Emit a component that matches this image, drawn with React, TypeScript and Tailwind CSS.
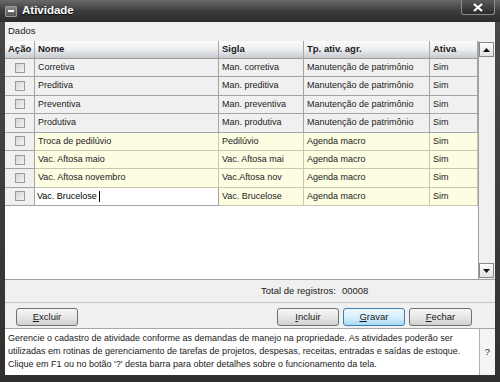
import React from 'react';

type Row = { nome: string; sigla: string; tipo: string; ativa: string; kind: 'man' | 'agenda' | 'edit' };

const rows: Row[] = [
  { nome: 'Corretiva', sigla: 'Man. corretiva', tipo: 'Manutenção de patrimônio', ativa: 'Sim', kind: 'man' },
  { nome: 'Preditiva', sigla: 'Man. preditiva', tipo: 'Manutenção de patrimônio', ativa: 'Sim', kind: 'man' },
  { nome: 'Preventiva', sigla: 'Man. preventiva', tipo: 'Manutenção de patrimônio', ativa: 'Sim', kind: 'man' },
  { nome: 'Produtiva', sigla: 'Man. produtiva', tipo: 'Manutenção de patrimônio', ativa: 'Sim', kind: 'man' },
  { nome: 'Troca de pedilúvio', sigla: 'Pedilúvio', tipo: 'Agenda macro', ativa: 'Sim', kind: 'agenda' },
  { nome: 'Vac. Aftosa maio', sigla: 'Vac. Aftosa mai', tipo: 'Agenda macro', ativa: 'Sim', kind: 'agenda' },
  { nome: 'Vac. Aftosa novembro', sigla: 'Vac.Aftosa nov', tipo: 'Agenda macro', ativa: 'Sim', kind: 'agenda' },
  { nome: 'Vac. Brucelose', sigla: 'Vac. Brucelose', tipo: 'Agenda macro', ativa: 'Sim', kind: 'edit' },
];

const grid = 'grid grid-cols-[30px_184px_85px_126px_48px]';

const Checkbox = () => (
  <div className="w-[10px] h-[10px] border border-[#9a9a9a] bg-gradient-to-br from-[#d6d6d6] to-[#f4f4f4]" />
);

const Button = ({ label, rest, primary }: { label: string; rest: string; primary?: boolean }) => (
  <button
    className={
      'w-full h-[18px] rounded-[3px] border text-[9.5px] text-[#1a1a1a] flex items-center justify-center ' +
      (primary
        ? 'border-[#3c7fb1] bg-gradient-to-b from-[#eaf6fd] via-[#d9f0fc] to-[#a7d9f5]'
        : 'border-[#707070] bg-gradient-to-b from-[#f6f6f6] via-[#e8e8e8] to-[#cfcfcf]')
    }
  >
    <span className="underline">{label}</span>
    {rest}
  </button>
);

const Header = () => (
  <div className={`${grid} h-[18px] border-b border-[#9c9c9c] bg-gradient-to-b from-[#fbfbfb] via-[#eceef0] to-[#c6cbd0] font-bold text-[9.5px] text-[#1a1a1a]`}>
    <div className="px-[3px] flex items-center border-r border-[#a8a8a8]">Ação</div>
    <div className="px-[3px] flex items-center border-r border-[#a8a8a8]">Nome</div>
    <div className="px-[3px] flex items-center border-r border-[#a8a8a8]">Sigla</div>
    <div className="px-[3px] flex items-center border-r border-[#a8a8a8]">Tp. ativ. agr.</div>
    <div className="px-[3px] flex items-center border-r border-[#a8a8a8]">Ativa</div>
  </div>
);

const TableRow = ({ r }: { r: Row }) => {
  const bg = r.kind === 'man' ? 'bg-[#f0f0f0]' : 'bg-[#fdfde2]';
  const line = r.kind === 'man' ? 'border-[#a4a4a4]' : 'border-[#c9c7b0]';
  return (
    <div className={`${grid} h-[18.4px] text-[9px] text-[#222]`}>
      <div className="flex items-center justify-center border-b border-r border-[#a4a4a4] bg-[#f0f0f0]">
        <Checkbox />
      </div>
      {r.kind === 'edit' ? (
        <div className="flex items-center px-[2px] border-b border-r border-[#a4a4a4] bg-white text-black">
          {r.nome}
          <span className="ml-[2px] w-px h-[11px] bg-black" />
        </div>
      ) : (
        <div className={`flex items-center px-[3px] border-b border-r ${line} ${bg}`}>{r.nome}</div>
      )}
      <div className={`flex items-center px-[3px] border-b border-r ${line} ${bg}`}>{r.sigla}</div>
      <div className={`flex items-center px-[3px] border-b border-r ${line} ${bg}`}>{r.tipo}</div>
      <div className={`flex items-center px-[3px] border-b border-r ${line} ${bg}`}>{r.ativa}</div>
    </div>
  );
};

const ScrollBtn = ({ up }: { up?: boolean }) => (
  <div className="w-[15px] h-[15px] border border-[#8a8a8a] bg-gradient-to-b from-[#fdfdfd] to-[#e2e2e2] flex items-center justify-center">
    <svg width="7" height="4" viewBox="0 0 7 4">
      {up ? <polygon points="0,4 7,4 3.5,0" fill="#111" /> : <polygon points="0,0 7,0 3.5,4" fill="#111" />}
    </svg>
  </div>
);

export default function App() {
  return (
    <div
      className="w-[500px] h-[382px] flex flex-col bg-gradient-to-b from-[#4a4a4a] to-[#303030]"
      style={{ fontFamily: '"Liberation Sans", Arial, sans-serif' }}
    >
      {/* title bar */}
      <div className="h-[22px] flex items-center bg-gradient-to-b from-[#6a6a6a] via-[#3c3c3c] to-[#2c2c2c] relative">
        <div className="ml-[5px] w-[12px] h-[11px] rounded-[1px] border border-[#9a9a9a] bg-gradient-to-b from-[#8a8a8a] to-[#555] flex items-center justify-center">
          <div className="w-[6px] h-[2px] bg-white" />
        </div>
        <span className="ml-[5px] text-[11.5px] font-bold text-white [text-shadow:0_1px_1px_#000]">Atividade</span>
        <div className="absolute right-[5px] top-0 w-[34px] h-[15px] rounded-b-[3px] border border-t-0 border-[#8c8c8c] bg-gradient-to-b from-[#5a5a5a] to-[#2a2a2a] flex items-center justify-center">
          <svg width="10" height="9" viewBox="0 0 10 9">
            <path d="M1 1 L9 8 M9 1 L1 8" stroke="#fff" strokeWidth="2.2" />
          </svg>
        </div>
      </div>

      {/* body */}
      <div className="flex-1 mx-[5px] mb-[7px] bg-[#f0f0f0] flex flex-col">
        <div className="h-[19px] flex items-center pl-[3px] text-[9.5px] text-[#1a1a1a]">Dados</div>

        <div className="h-[239px] flex border-b border-[#a0a0a0]">
          <div className="w-[473px] flex flex-col bg-white">
            <Header />
            {rows.map((r) => (
              <TableRow key={r.nome} r={r} />
            ))}
          </div>
          <div className="w-[16px] flex flex-col justify-between items-center bg-[#f0f0f0] border-l border-[#a0a0a0] py-px">
            <ScrollBtn up />
            <ScrollBtn />
          </div>
        </div>

        <div className="h-[23px] flex items-center pl-[256px] text-[9.5px] text-[#1a1a1a] border-b border-[#c4c4c4]">
          <span>Total de registros:</span>
          <span className="ml-[6px]">00008</span>
        </div>

        <div className="h-[26px] flex items-start pt-[5px] pl-[11px] pr-[23px] border-b border-[#a8a8a8]">
          <div className="w-[62px]">
            <Button label="E" rest="xcluir" />
          </div>
          <div className="flex-1" />
          <div className="flex gap-[4px]">
            <div className="w-[62px]"><Button label="I" rest="ncluir" /></div>
            <div className="w-[62px]"><Button label="G" rest="ravar" primary /></div>
            <div className="w-[63px]"><Button label="F" rest="echar" /></div>
          </div>
        </div>

        <div className="flex-1 flex">
          <div className="flex-1 bg-white px-[3px] pt-[3px] text-[9px] leading-[13px] text-[#1a1a1a]">
            Gerencie o cadastro de atividade conforme as demandas de manejo na propriedade. As atividades poderão ser
            utilizadas em rotinas de gerenciamento de tarefas de projetos, despesas, receitas, entradas e saídas de estoque.
            Clique em F1 ou no botão '?' desta barra para obter detalhes sobre o funcionamento da tela.
          </div>
          <div className="w-[16px] border-l border-[#b0b0b0] bg-[#f4f4f4] flex items-center justify-center text-[9.5px] text-[#222]">
            ?
          </div>
        </div>
      </div>
    </div>
  );
}
